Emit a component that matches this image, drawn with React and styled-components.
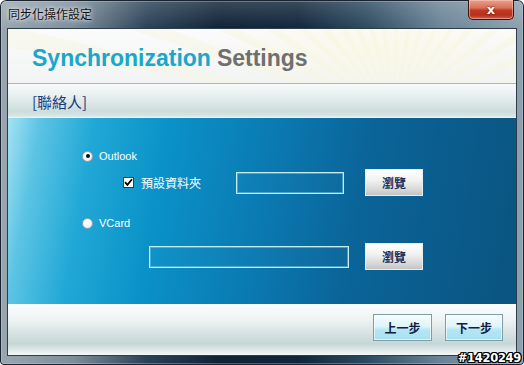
import React from "react";
import styled, { createGlobalStyle } from "styled-components";

const Global = createGlobalStyle`
  html, body { margin: 0; padding: 0; background: #ffffff; }
  body { font-family: "Liberation Sans", Arial, sans-serif; }
  * { box-sizing: border-box; }
`;

const cjk = `"Noto Sans CJK TC", "Noto Sans CJK SC", sans-serif`;

const Window = styled.div`
  position: relative;
  width: 524px;
  height: 365px;
  display: flex;
  flex-direction: column;
  padding: 0 7px 9px;
  border-radius: 6px 6px 4px 4px;
  box-shadow: inset 0 0 0 1px #1a2430, inset 0 0 0 2px rgba(200,215,225,0.35);
  background:
    linear-gradient(180deg, rgba(255,255,255,0.18) 0%, rgba(255,255,255,0) 8%),
    linear-gradient(90deg, #9aa7b0 0%, #7d8e9b 14%, #2a4256 28%, #0f2336 42%, #10263a 57%, #2c4a60 70%, #6a8496 84%, #8ea2ae 100%);
`;

const TitleBar = styled.div`
  height: 28px;
  display: flex;
  align-items: flex-start;
  justify-content: space-between;
  margin: 0 -7px;
  padding-left: 8px;
  padding-right: 10px;
`;

const TitleText = styled.span`
  margin-top: 6px;
  font-family: ${cjk};
  font-size: 12px;
  line-height: 16px;
  color: #101010;
  text-shadow: 0 0 6px rgba(255,255,255,0.9), 0 0 3px rgba(255,255,255,0.8);
`;

const CloseButton = styled.div`
  width: 46px;
  height: 20px;
  display: flex;
  align-items: center;
  justify-content: center;
  border: 1px solid #3b1610;
  border-top: none;
  border-radius: 0 0 5px 5px;
  background: linear-gradient(180deg, #e9a08c 0%, #d9725c 40%, #c03a22 55%, #b8301c 80%, #d06048 100%);
  box-shadow: inset 0 0 0 1px rgba(255,220,210,0.45);
  color: #ffffff;
  font-family: "DejaVu Sans", sans-serif;
  font-weight: bold;
  font-size: 13px;
  text-shadow: 0 0 2px #5a1408, 0 0 1px #5a1408;
`;

const Client = styled.div`
  flex: 1;
  display: flex;
  flex-direction: column;
  border: 1px solid #2e3d4a;
  background: #ffffff;
`;

const Header = styled.div`
  height: 55px;
  display: flex;
  align-items: center;
  padding: 4px 0 0 24px;
  border-bottom: 1px solid #a8b8bc;
  background:
    radial-gradient(ellipse 240px 80px at 72% 40%, rgba(250,248,220,0.55), rgba(255,255,255,0) 70%),
    repeating-conic-gradient(from 200deg at 76% 160%, rgba(245,244,220,0.4) 0deg 3deg, rgba(255,255,255,0) 3deg 8deg),
    linear-gradient(180deg, #fbfbfb 0%, #f2f4f4 100%);
`;

const HeaderTitle = styled.h1`
  margin: 0;
  font-family: "Liberation Sans", Arial, sans-serif;
  font-weight: bold;
  font-size: 23px;
  line-height: 28px;
  color: ${p => p.$muted ? "#6f6f6f" : "#1ba6cc"};
  display: inline;
`;

const TitleWrap = styled.div`
  display: flex;
  gap: 6px;
`;

const SectionBar = styled.div`
  height: 34px;
  display: flex;
  align-items: center;
  padding: 1px 0 0 24px;
  background: linear-gradient(180deg, #f7fafa 0%, #e8f0f0 35%, #cddcdc 80%, #d6e3e3 92%, #eef4f4 100%);
  font-family: ${cjk};
  font-size: 15px;
  color: #1b3a78;
`;

const Panel = styled.div`
  height: 186px;
  display: flex;
  flex-direction: column;
  padding: 31px 0 0 74px;
  background:
    linear-gradient(100deg, #a4e2f2 0%, #5cc4e4 6%, #22a8d6 16%, #0a92c8 30%, #0a7cb4 48%, #0a6498 68%, #0a5480 100%);
`;

const RadioRow = styled.label`
  display: flex;
  align-items: center;
  gap: 6px;
  height: 14px;
  margin-bottom: ${p => p.$mb || 0}px;
  color: #ffffff;
  font-size: 11px;
`;

const Radio = styled.span`
  width: 11px;
  height: 11px;
  border-radius: 50%;
  background: radial-gradient(circle at 40% 35%, #ffffff 0%, #f4f4f4 55%, #d8d8d8 100%);
  border: 1px solid #9aa4aa;
  display: flex;
  align-items: center;
  justify-content: center;
  &::after {
    content: "";
    width: 4px;
    height: 4px;
    border-radius: 50%;
    background: ${p => p.$checked ? "#101010" : "transparent"};
  }
`;

const FieldRow = styled.div`
  display: flex;
  align-items: center;
  height: 27px;
  padding-left: ${p => p.$indent}px;
  margin-bottom: ${p => p.$mb || 0}px;
`;

const CheckGroup = styled.label`
  width: 113px;
  display: flex;
  align-items: center;
  gap: 7px;
  font-family: ${cjk};
  font-size: 12px;
  color: #ffffff;
`;

const Check = styled.span`
  width: 11px;
  height: 11px;
  background: #ffffff;
  border: 1px solid #3a3a3a;
  display: flex;
  align-items: center;
  justify-content: center;
`;

const PathInput = styled.div`
  width: ${p => p.$w}px;
  height: 22px;
  border: 1px solid #c6ecf6;
  box-shadow: inset 0 0 0 1px rgba(120,200,230,0.55);
  background: rgba(255,255,255,0.02);
`;

const BrowseButton = styled.button`
  width: 58px;
  height: 27px;
  margin-left: ${p => p.$ml}px;
  padding: 0;
  border: 1px solid #e8eef0;
  background: linear-gradient(180deg, #ffffff 0%, #f2f2f2 40%, #d6d6d6 80%, #c4c4c4 100%);
  font-family: ${cjk};
  font-weight: bold;
  font-size: 12px;
  color: #1a2e58;
`;

const Footer = styled.div`
  flex: 1;
  display: flex;
  justify-content: flex-end;
  align-items: flex-start;
  gap: 13px;
  padding: 10px 13px 0 0;
  background: linear-gradient(180deg, #fbfdfd 0%, #eef3f3 30%, #d4e0e0 62%, #c6d6d6 78%, #e2ecec 92%, #f4f8f8 100%);
`;

const StepButton = styled.button`
  width: ${p => p.$w}px;
  height: 27px;
  padding: 0;
  border: 1px solid #7d9ea6;
  box-shadow: inset 0 0 0 1px rgba(255,255,255,0.6);
  background: linear-gradient(180deg, #f4fcfe 0%, #e0f5fb 45%, #b4e6f4 60%, #a8e0f2 100%);
  font-family: ${cjk};
  font-weight: bold;
  font-size: 12px;
  color: #10203e;
`;

const Watermark = styled.span`
  position: absolute;
  right: 3px;
  bottom: 0;
  font-family: "DejaVu Sans", sans-serif;
  font-weight: bold;
  font-size: 11.5px;
  line-height: 13px;
  letter-spacing: -0.3px;
  color: #ffffff;
  text-shadow: 1px 0 0 #000, -1px 0 0 #000, 0 1px 0 #000, 0 -1px 0 #000, 1px 1px 0 #000, -1px -1px 0 #000, 1px -1px 0 #000, -1px 1px 0 #000;
`;

export default function App() {
  return (
    <>
      <Global />
      <Window>
        <TitleBar>
          <TitleText>同步化操作設定</TitleText>
          <CloseButton>x</CloseButton>
        </TitleBar>
        <Client>
          <Header>
            <TitleWrap>
              <HeaderTitle>Synchronization</HeaderTitle>
              <HeaderTitle $muted>Settings</HeaderTitle>
            </TitleWrap>
          </Header>
          <SectionBar>[聯絡人]</SectionBar>
          <Panel>
            <RadioRow $mb={6}>
              <Radio $checked />
              Outlook
            </RadioRow>
            <FieldRow $indent={41} $mb={20}>
              <CheckGroup>
                <Check>
                  <svg width="9" height="9" viewBox="0 0 9 9">
                    <path d="M1 4.2 L3.4 6.8 L8 1.2" fill="none" stroke="#000" strokeWidth="1.8" />
                  </svg>
                </Check>
                預設資料夾
              </CheckGroup>
              <PathInput $w={108} />
              <BrowseButton $ml={21}>瀏覽</BrowseButton>
            </FieldRow>
            <RadioRow $mb={13}>
              <Radio />
              VCard
            </RadioRow>
            <FieldRow $indent={67}>
              <PathInput $w={200} />
              <BrowseButton $ml={16}>瀏覽</BrowseButton>
            </FieldRow>
          </Panel>
          <Footer>
            <StepButton $w={59}>上一步</StepButton>
            <StepButton $w={58}>下一步</StepButton>
          </Footer>
        </Client>
        <Watermark>#1420249</Watermark>
      </Window>
    </>
  );
}
